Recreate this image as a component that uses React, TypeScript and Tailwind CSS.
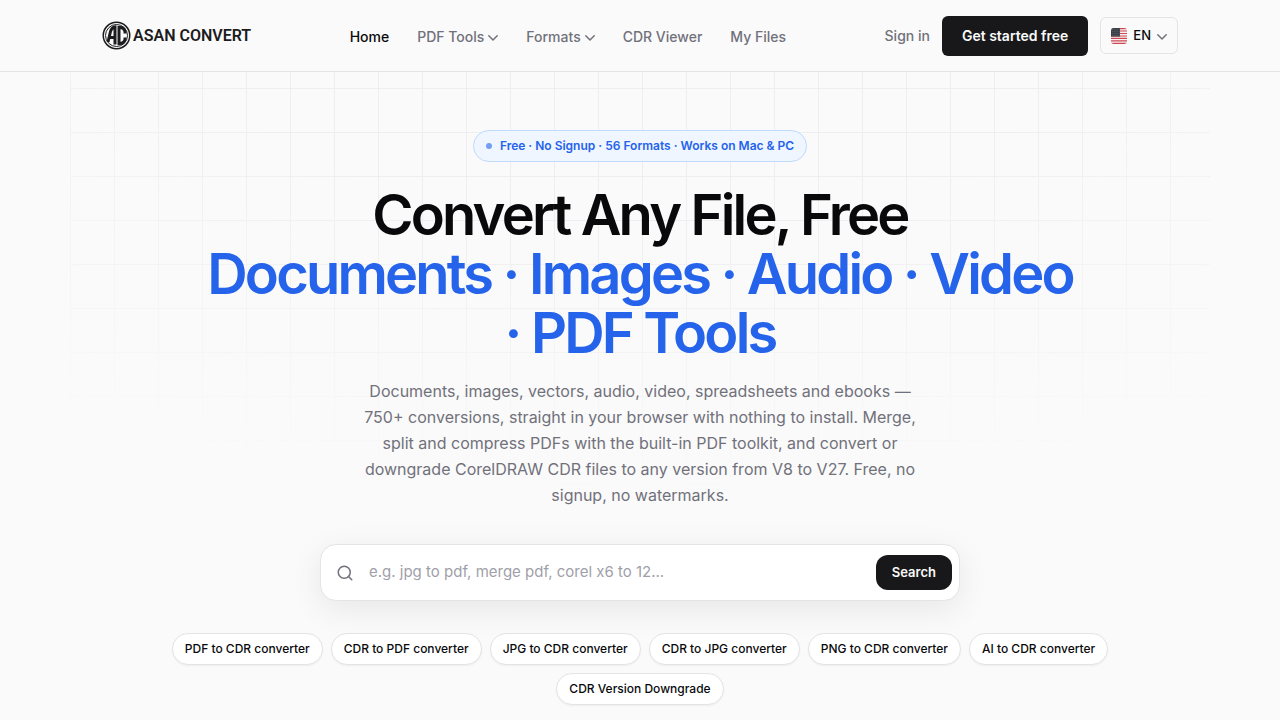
import React from 'react'
import { Search } from 'lucide-react'

const navItems = [
  { label: 'Home', active: true },
  { label: 'PDF Tools', menu: true },
  { label: 'Formats', menu: true },
  { label: 'CDR Viewer' },
  { label: 'My Files' },
]

const popular = [
  'PDF to CDR converter',
  'CDR to PDF converter',
  'JPG to CDR converter',
  'CDR to JPG converter',
  'PNG to CDR converter',
  'AI to CDR converter',
  'CDR Version Downgrade',
]

const Chevron = () => (
  <svg width="10" height="6" viewBox="0 0 10 6" fill="none" className="mt-0.5 text-zinc-500" aria-hidden="true">
    <path d="M.8 .8 5 5 9.2 .8" stroke="currentColor" strokeWidth="1.5" strokeLinecap="round" strokeLinejoin="round" />
  </svg>
)

const Logo = () => (
  <a href="#" className="flex items-center gap-0.5 text-[#1c1c1e]">
    <svg width="29" height="29" viewBox="0 0 58 58" fill="none" stroke="currentColor" aria-hidden="true">
      <circle cx="29" cy="29" r="26.5" strokeWidth="3" />
      <circle cx="29" cy="29" r="22" strokeWidth="2" />
      <path d="M12 42 L17 21 Q19 13 26 12 V47 M15 33 H26" strokeWidth="6" />
      <path d="M46 25 V21 Q44 13 37 13 H34 V45 H37 Q44 45 46 37 V33" strokeWidth="6" />
    </svg>
    <span className="font-['Roboto',sans-serif] text-base leading-none font-semibold whitespace-nowrap">ASAN CONVERT</span>
  </a>
)

const UsFlag = () => (
  <svg width="16" height="16" viewBox="0 0 16 16" className="rounded-[3px]" aria-hidden="true">
    <rect width="16" height="16" fill="#f4f4f5" />
    <path d="M0 .6H16M0 3H16M0 5.500H16M0 8H16M0 10.400H16M0 12.900H16M0 15.400H16" stroke="#cf4650" strokeWidth="1.2" />
    <rect width="9" height="8.6" fill="#3c4048" />
    <path d="M1 1.500H9M1 3.500H9M1 5.500H9M1 7.500H9" stroke="#71757d" strokeWidth=".6" strokeDasharray=".7 1.1" />
  </svg>
)

const Header = () => (
  <header className="relative z-10 border-b border-zinc-200 bg-[#fafafa]">
    <div className="mx-auto flex h-[71px] max-w-[1140px] items-center justify-between px-8">
      <Logo />
      <nav className="flex items-center gap-7 pt-0.5 text-sm font-medium text-zinc-500">
        {navItems.map((item) =>
          item.menu ? (
            <button key={item.label} type="button" className="flex cursor-pointer items-center gap-1">
              {item.label}
              <Chevron />
            </button>
          ) : (
            <a key={item.label} href="#" className={item.active ? 'text-zinc-950' : 'hover:text-zinc-950'}>
              {item.label}
            </a>
          )
        )}
      </nav>
      <div className="flex items-center gap-3">
        <a href="#" className="text-sm font-medium text-zinc-500">
          Sign in
        </a>
        <button type="button" className="h-10 cursor-pointer rounded-md bg-zinc-900 px-5 text-sm font-semibold text-zinc-50">
          Get started free
        </button>
        <button
          type="button"
          aria-label="Language"
          className="flex h-[37px] cursor-pointer items-center gap-1.5 rounded-md border border-zinc-200 px-2.5 text-[13px] font-medium text-zinc-950"
        >
          <UsFlag />
          EN
          <Chevron />
        </button>
      </div>
    </div>
  </header>
)

const Hero = () => (
  <section className="relative px-8 pt-[58px] pb-4">
    <div
      aria-hidden="true"
      className="pointer-events-none absolute inset-x-0 -top-7 mx-auto h-[520px] max-w-[1140px] bg-[linear-gradient(to_right,#e4e4e7_1px,transparent_1px),linear-gradient(to_bottom,#e4e4e7_1px,transparent_1px)] bg-size-[44px_44px] opacity-50 mask-[radial-gradient(ellipse_90%_90%_at_50%_0%,#000_40%,transparent_100%)]"
    />
    <div className="relative flex flex-col items-center text-center">
      <p className="flex items-center gap-2 rounded-full border border-[#bfdbfe] bg-[#eff6ff] px-3 py-1.5 text-xs leading-[18px] font-semibold text-[#2563eb]">
        <span className="size-1.5 rounded-full bg-[#2563eb]/60" />
        Free · No Signup · 56 Formats · Works on Mac &amp; PC
      </p>
      <h1 className="mt-6 max-w-[880px] text-[56px] leading-[59px] font-semibold tracking-tighter text-zinc-950">
        Convert Any File, Free
        <br />
        <span className="text-[#2563eb]">Documents · Images · Audio · Video · PDF Tools</span>
      </h1>
      <p className="mt-[15px] max-w-[560px] text-base leading-[26px] text-zinc-500">
        Documents, images, vectors, audio, video, spreadsheets and ebooks — 750+ conversions, straight in your browser
        with nothing to install. Merge, split and compress PDFs with the built-in PDF toolkit, and convert or downgrade
        CorelDRAW CDR files to any version from V8 to V27. Free, no signup, no watermarks.
      </p>
      <form
        onSubmit={(e) => e.preventDefault()}
        className="mt-9 flex w-full max-w-[640px] items-center rounded-2xl border border-zinc-200 bg-white py-2.5 pr-[7px] pl-[15px] shadow-[0_8px_32px_rgba(0,0,0,0.08)]"
      >
        <Search size={18} className="shrink-0 text-zinc-500" />
        <input
          type="text"
          aria-label="Search conversions"
          placeholder="e.g. jpg to pdf, merge pdf, corel x6 to 12..."
          className="min-w-0 flex-1 px-[15px] text-[15px] text-zinc-950 placeholder:text-zinc-400 focus:outline-none"
        />
        <button type="submit" className="h-[35px] cursor-pointer rounded-xl bg-zinc-900 px-4 text-[13px] font-semibold text-zinc-50">
          Search
        </button>
      </form>
      <div className="mt-8 flex max-w-[960px] flex-wrap justify-center gap-2">
        {popular.map((label) => (
          <a
            key={label}
            href="#"
            className="rounded-full border border-zinc-200 bg-white px-3 py-1.5 text-xs leading-[18px] font-medium text-zinc-950 shadow-xs"
          >
            {label}
          </a>
        ))}
      </div>
    </div>
  </section>
)

const App = () => {
  return (
    <div className="min-h-screen bg-[#fafafa] font-['Inter',sans-serif] antialiased">
      <Header />
      <main>
        <Hero />
      </main>
    </div>
  )
}

export default App
